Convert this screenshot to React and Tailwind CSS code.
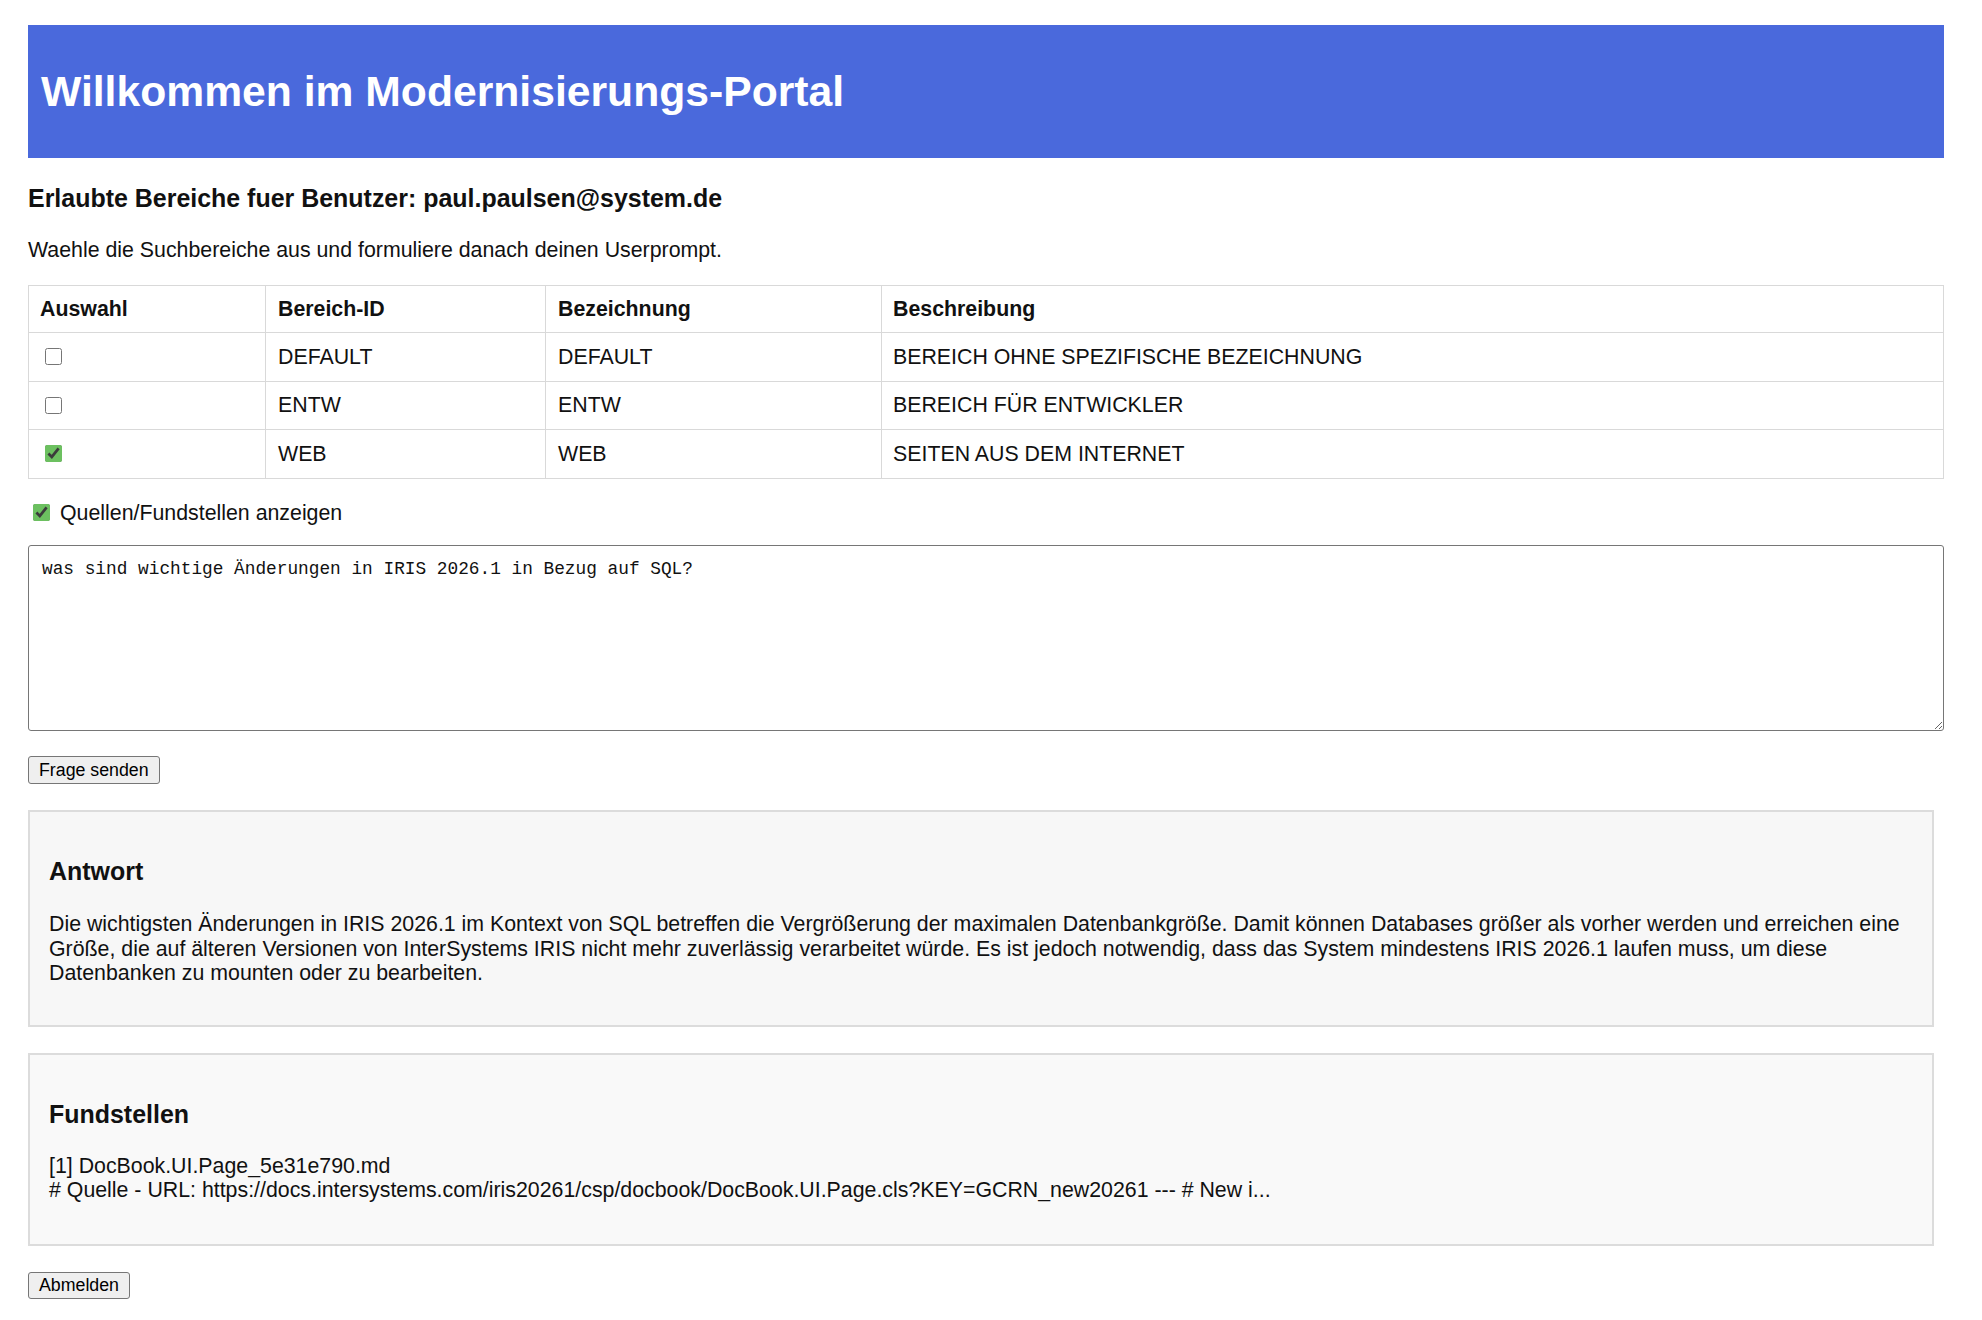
import { useState } from 'react'

const bereiche = [
  { id: 'DEFAULT', name: 'DEFAULT', beschreibung: 'BEREICH OHNE SPEZIFISCHE BEZEICHNUNG', checked: false },
  { id: 'ENTW', name: 'ENTW', beschreibung: 'BEREICH FÜR ENTWICKLER', checked: false },
  { id: 'WEB', name: 'WEB', beschreibung: 'SEITEN AUS DEM INTERNET', checked: true },
]

const antwort =
  'Die wichtigsten Änderungen in IRIS 2026.1 im Kontext von SQL betreffen die Vergrößerung der maximalen Datenbankgröße. Damit können Databases größer als vorher werden und erreichen eine Größe, die auf älteren Versionen von InterSystems IRIS nicht mehr zuverlässig verarbeitet würde. Es ist jedoch notwendig, dass das System mindestens IRIS 2026.1 laufen muss, um diese Datenbanken zu mounten oder zu bearbeiten.'

function App() {
  const [auswahl, setAuswahl] = useState(bereiche.map(b => b.checked))
  const [quellen, setQuellen] = useState(true)
  const [prompt, setPrompt] = useState('was sind wichtige Änderungen in IRIS 2026.1 in Bezug auf SQL?')

  const toggle = (i) => setAuswahl(prev => prev.map((v, j) => (j === i ? !v : v)))

  return (
    <div className="min-h-screen bg-white text-[#111] font-['Liberation_Sans',Arial,sans-serif] text-[21.33px] leading-[24.5px] pl-[28px] pr-[38px] pt-[25px] pb-[20px]">
      <header className="h-[133px] bg-[#4a69dc] flex items-center px-[13px]">
        <h1 className="text-white font-bold text-[42.67px] leading-[49px]">Willkommen im Modernisierungs-Portal</h1>
      </header>

      <h3 className="mt-[26px] font-bold text-[24.96px] leading-[28px]">
        Erlaubte Bereiche fuer Benutzer: paul.paulsen@system.de
      </h3>
      <p className="mt-[26px]">Waehle die Suchbereiche aus und formuliere danach deinen Userprompt.</p>

      {/* Bereichsauswahl */}
      <table className="mt-[22px] w-full border-collapse table-fixed">
        <colgroup>
          <col className="w-[237px]" />
          <col className="w-[280px]" />
          <col className="w-[336px]" />
          <col />
        </colgroup>
        <thead>
          <tr>
            <th className="border border-[#d9d9d9] text-left font-bold px-[11px] py-[11px]">Auswahl</th>
            <th className="border border-[#d9d9d9] text-left font-bold px-[12px] py-[11px]">Bereich-ID</th>
            <th className="border border-[#d9d9d9] text-left font-bold px-[12px] py-[11px]">Bezeichnung</th>
            <th className="border border-[#d9d9d9] text-left font-bold px-[11px] py-[11px]">Beschreibung</th>
          </tr>
        </thead>
        <tbody>
          {bereiche.map((b, i) => (
            <tr key={b.id}>
              <td className="border border-[#d9d9d9] px-[12px] py-[11.5px]">
                <input
                  type="checkbox"
                  checked={auswahl[i]}
                  onChange={() => toggle(i)}
                  className="block w-[17px] h-[17px] ml-[4px] accent-[#6cc060]"
                />
              </td>
              <td className="border border-[#d9d9d9] px-[12px] py-[11.5px]">{b.id}</td>
              <td className="border border-[#d9d9d9] px-[12px] py-[11.5px]">{b.name}</td>
              <td className="border border-[#d9d9d9] px-[11px] py-[11.5px]">{b.beschreibung}</td>
            </tr>
          ))}
        </tbody>
      </table>

      <label className="mt-[22px] flex items-center gap-[10px] pl-[5px]">
        <input
          type="checkbox"
          checked={quellen}
          onChange={() => setQuellen(!quellen)}
          className="w-[17px] h-[17px] accent-[#6cc060]"
        />
        <span>Quellen/Fundstellen anzeigen</span>
      </label>

      <textarea
        value={prompt}
        onChange={e => setPrompt(e.target.value)}
        className="mt-[20px] block w-full h-[186px] border border-[#767676] rounded-[3px] px-[13px] pt-[12px] pb-[8px] font-['Liberation_Mono','DejaVu_Sans_Mono',monospace] text-[17.8px] leading-[22px] text-[#111]"
      />

      <button className="mt-[25px] block h-[28px] px-[10px] bg-[#efefef] border border-[#767676] rounded-[3px] text-[17.78px] leading-[20px] text-black">
        Frage senden
      </button>

      <section className="mt-[26px] mr-[10px] bg-[#f7f7f7] border-2 border-[#dcdcdc] px-[19px] pt-[19px] pb-[19px]">
        <h3 className="mt-[26px] mb-[27px] font-bold text-[24.96px] leading-[28px]">Antwort</h3>
        <p className="mb-[20px]">{antwort}</p>
      </section>

      <section className="mt-[26px] mr-[10px] bg-[#f9f9f9] border-2 border-[#dcdcdc] px-[19px] pt-[19px] pb-[21px]">
        <h3 className="mt-[26px] mb-[26px] font-bold text-[24.96px] leading-[28px]">Fundstellen</h3>
        <div className="mb-[20px]">
          <div>[1] DocBook.UI.Page_5e31e790.md</div>
          <div>
            # Quelle - URL: https://docs.intersystems.com/iris20261/csp/docbook/DocBook.UI.Page.cls?KEY=GCRN_new20261 --- # New i...
          </div>
        </div>
      </section>

      <button className="mt-[26px] block h-[27px] px-[10px] bg-[#efefef] border border-[#767676] rounded-[3px] text-[17.78px] leading-[20px] text-black">
        Abmelden
      </button>
    </div>
  )
}

export default App
